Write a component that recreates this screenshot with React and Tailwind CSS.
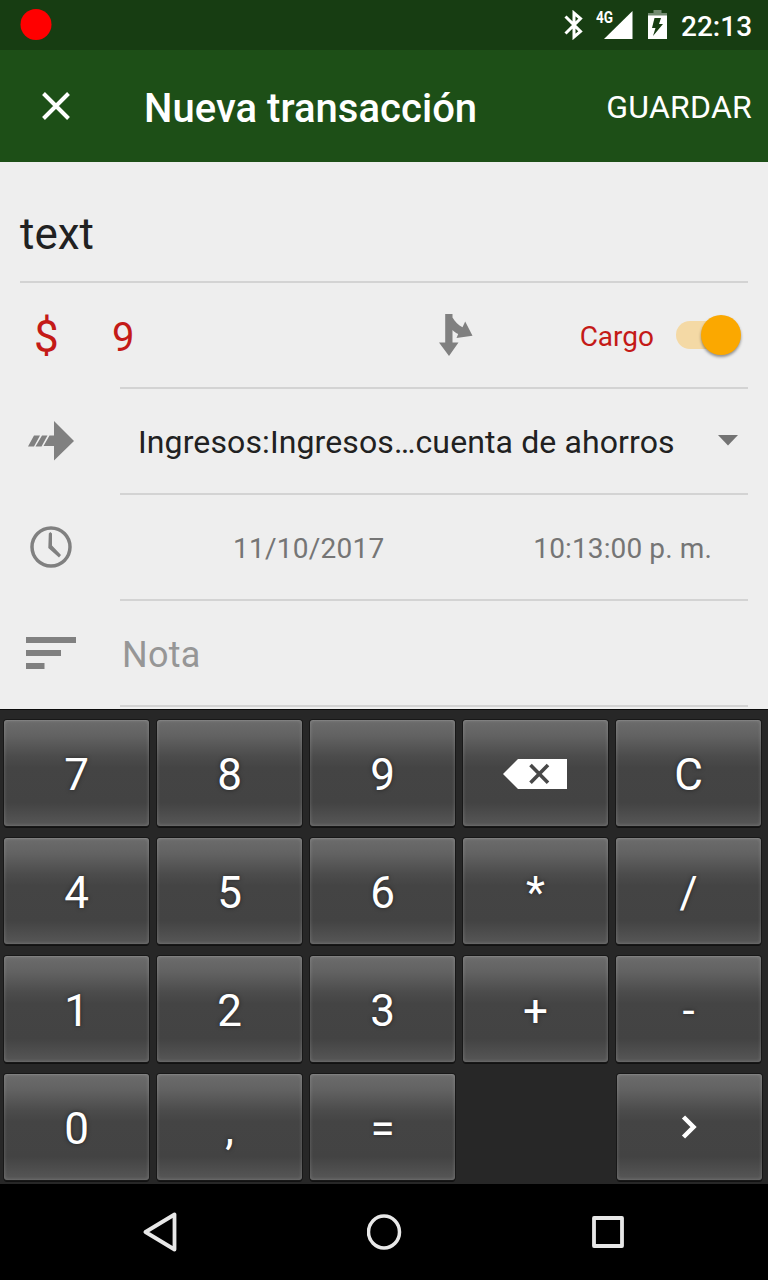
import React from "react";

const KEY =
  "flex h-[106px] w-[145px] items-center justify-center rounded-[3px] bg-[linear-gradient(180deg,#6c6c6c_0%,#626262_15%,#4c4c4c_34%,#444444_45%,#434343_78%,#575757_100%)] text-[44px] leading-none text-white shadow-[0_0_0_1px_#181818,0_2px_0_0_#121212,inset_0_0_3px_1px_rgba(255,255,255,0.14),inset_0_1px_0_0_rgba(255,255,255,0.06)] [text-shadow:0_0_4px_rgba(0,0,0,0.5)]";

function Backspace() {
  return (
    <svg className="mt-0.5 mr-0.5 h-[30px] w-16" viewBox="0 0 64 30">
      <path d="M0 15 15 0H64V30H15Z" fill="#fff" />
      <path d="M27.500 6 45 23.800M45 6 27.500 23.800" stroke="#484848" strokeWidth="3.600" fill="none" />
    </svg>
  );
}

function Chevron() {
  return (
    <svg className="mr-0.5 h-6 w-4" viewBox="0 0 16 24">
      <path d="M2.500 2 12.500 12 2.500 22" stroke="#fff" strokeWidth="4.500" fill="none" />
    </svg>
  );
}

const ROWS = [
  ["7", "8", "9", "back", "C"],
  ["4", "5", "6", "*", "/"],
  ["1", "2", "3", "+", "-"],
];

function Key({ label }) {
  return <button className={KEY}>{label === "back" ? <Backspace /> : <span className="pt-1">{label}</span>}</button>;
}

function StatusBar() {
  return (
    <header className="flex h-[50px] items-center bg-[#173d12] pr-4 pl-5 text-white">
      <svg className="h-8 w-8" viewBox="0 0 32 32">
        <circle cx="16" cy="15.500" r="15.500" fill="#ff0000" />
      </svg>
      <svg className="ml-auto h-[30px] w-[20px]" viewBox="0 0 20 30" fill="none" stroke="#fff" strokeWidth="3">
        <path d="M1.500 6.500 16.500 21.500 10 27V3L16.500 8.500 1.500 23.500" />
      </svg>
      <div className="ml-3 flex h-[30px] w-[40px] items-start">
        <span className="w-[18px] origin-left scale-x-[0.85] text-[16px] leading-4 font-bold whitespace-nowrap">4G</span>
        <svg className="-ml-[10.500px] h-[30px] w-[29px]" viewBox="0 0 29 30">
          <path d="M0 29 28.500 1V29Z" fill="#fff" />
        </svg>
      </div>
      <svg className="ml-[12px] h-[30px] w-[19px]" viewBox="0 0 19 30">
        <path d="M5.500 0h8v3H19v3H0V3h5.500Z" fill="#728a70" />
        <path d="M0 5.500h19v23.500H0Z" fill="#fff" />
        <path d="M6.500 8H13L11 14H15L5 26 7.500 18H4Z" fill="#173d12" />
      </svg>
      <span className="ml-[14px] w-[71px] pt-[3px] text-[28px] leading-none font-medium whitespace-nowrap">22:13</span>
    </header>
  );
}

export default function App() {
  return (
    <div className="flex h-[1280px] w-[768px] flex-col overflow-hidden bg-black font-['Roboto',sans-serif]">
      <StatusBar />
      <div className="flex h-28 items-center bg-[#1d4f17] pr-4 pl-[42px] text-white">
        <svg className="h-7 w-7" viewBox="0 0 28 28" stroke="#fff" strokeWidth="4" fill="none">
          <path d="M1.500 1.500 26.500 26.500M26.500 1.500 1.500 26.500" />
        </svg>
        <h1 className="ml-[74px] pt-1.5 text-[40px] leading-none font-medium tracking-[0.04px] whitespace-nowrap">Nueva transacción</h1>
        <button className="ml-auto pt-0.5 text-[32px] leading-none tracking-[0.25px]">GUARDAR</button>
      </div>

      <main className="flex h-[547px] flex-col bg-[#eeeeee] px-5">
        <div className="flex h-[121px] items-center border-b-2 border-[#d3d3d3] pt-[25px] text-[44px] leading-none text-[#212121]">
          text
        </div>
        <div className="flex h-[106px]">
          <div className="flex w-[92px] items-center pt-0.5 pl-[14px] text-[44px] leading-none text-[#c41a17]">$</div>
          <div className="flex w-[8px] items-center pt-1 text-[40px] leading-none text-[#c41a17]">9</div>
          <div className="flex flex-1 items-center border-b-2 border-[#d3d3d3] pr-[7px]">
            <svg className="ml-[319px] h-[42px] w-[34px]" viewBox="0 0 34 42">
              <path d="M6.200 0H13.500V3.500C16 8 19.500 11 23.500 13.200L26.200 7.500 33.500 21.700 17.500 24 19.200 20C17 19.200 15 17.500 13.500 16V28.500H19.500L10 42 0 28.500H6.200Z" fill="#808080" />
            </svg>
            <span className="ml-auto pt-1 text-[28px] leading-none text-[#c41a17]">Cargo</span>
            <div className="ml-[22px] flex h-7 w-[65px] items-center justify-end rounded-full bg-[linear-gradient(90deg,#f4d9a5_0,#f4d9a5_50px,transparent_50px)]">
              <span className="h-10 w-10 shrink-0 rounded-full bg-[#fba800] shadow-[0_2px_3px_rgba(0,0,0,0.4)]" />
            </div>
          </div>
        </div>
        <div className="flex h-[106px]">
          <div className="flex w-[100px] items-center pb-0.5 pl-2">
            <svg className="h-10 w-[46px]" viewBox="0 0 46 40" fill="#808080">
              <path d="M26 0 46 20 26 39.500V25H15.500L21.500 14.500H26ZM6 14.500H12L6 25.500H0ZM14 14.500H19.500L13.500 25.500H7.500Z" />
            </svg>
          </div>
          <div className="flex flex-1 items-center justify-between border-b-2 border-[#d3d3d3] pr-2.5 pl-[18px]">
            <span className="pt-0.5 text-[32px] leading-none tracking-[0.115px] whitespace-nowrap text-[#212121]">Ingresos:Ingresos…cuenta de ahorros</span>
            <svg className="mb-0.5 h-[11px] w-5" viewBox="0 0 20 11">
              <path d="M0 0H20L10 10.500Z" fill="#737373" />
            </svg>
          </div>
        </div>
        <div className="flex h-[106px]">
          <div className="flex w-[100px] items-center pb-0.5 pl-[10px]">
            <svg className="h-[42px] w-[42px]" viewBox="0 0 42 42" fill="none" stroke="#808080">
              <circle cx="21" cy="21" r="19" strokeWidth="3.500" />
              <path d="M18.800 7.500 20.300 6 22 7.500V19.500L31 29 29 31.500 18.300 22Z" fill="#808080" stroke="none" />
            </svg>
          </div>
          <div className="flex flex-1 items-center justify-between border-b-2 border-[#d3d3d3] pt-1 pr-9 pl-[113px] text-[28px] leading-none text-[#757575]">
            <span className="tracking-[0.25px]">11/10/2017</span>
            <span className="tracking-[0.13px]">10:13:00 p. m.</span>
          </div>
        </div>
        <div className="flex h-[106px]">
          <div className="flex w-[100px] items-center pb-0.5 pl-1.5">
            <svg className="h-8 w-[50px]" viewBox="0 0 50 32" fill="#808080">
              <path d="M0 0H50V6H0ZM0 13H35V19H0ZM0 26H18.500V32H0Z" />
            </svg>
          </div>
          <div className="flex flex-1 items-center border-b-2 border-[#d3d3d3] pt-1 pl-0.5 text-[36px] leading-none tracking-[0.25px] text-[#969696]">
            Nota
          </div>
        </div>
      </main>

      <section className="flex h-[475px] flex-col gap-3 border-t border-[#0c0c0c] bg-[#272727] pt-2.5 pl-1">
        {ROWS.map((row) => (
          <div key={row[0]} className="flex gap-2">
            {row.map((label) => (
              <Key key={label} label={label} />
            ))}
          </div>
        ))}
        <div className="flex gap-2">
          <Key label="0" />
          <Key label="," />
          <Key label="=" />
          <button className={`${KEY} ml-[154px]`}>
            <Chevron />
          </button>
        </div>
      </section>

      <nav className="flex h-24 items-center justify-between bg-black pr-[144px] pl-[143px]">
        <svg className="h-10 w-[34px]" viewBox="0 0 34 40" fill="none" stroke="#e8e8e8" strokeWidth="3.800" strokeLinejoin="round">
          <path d="M2.500 20 31.500 2.500V37.500Z" />
        </svg>
        <svg className="h-9 w-[35px]" viewBox="0 0 35 36" fill="none" stroke="#e8e8e8" strokeWidth="3.500">
          <ellipse cx="17" cy="18" rx="15.500" ry="16" />
        </svg>
        <svg className="h-8 w-8" viewBox="0 0 32 32" fill="none" stroke="#e8e8e8" strokeWidth="3.800" strokeLinejoin="round">
          <path d="M2 2H30V30H2Z" />
        </svg>
      </nav>
    </div>
  );
}
